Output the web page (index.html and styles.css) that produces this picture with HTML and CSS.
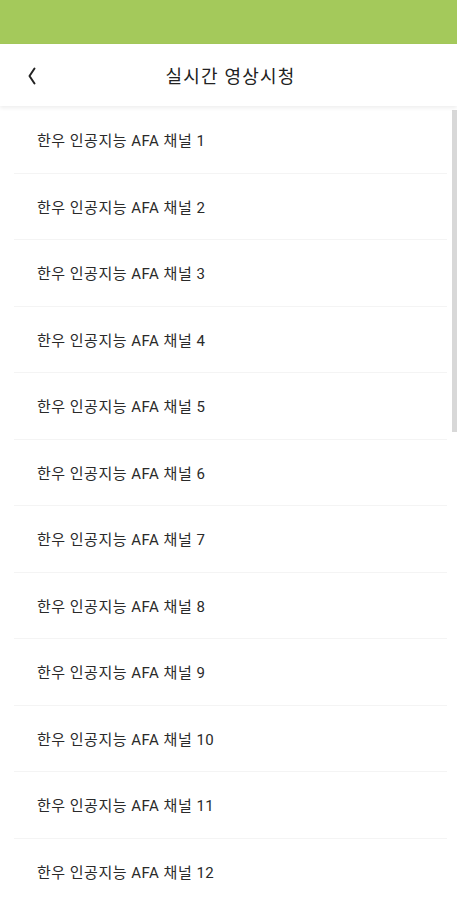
FILE: index.html
```html
<!DOCTYPE html>
<html lang="ko">
<head>
    <meta charset="UTF-8">
    <meta name="viewport" content="width=device-width, initial-scale=1.0">
    <title>실시간 영상시청</title>
    <link rel="stylesheet" href="styles.css">
</head>
<body>
    <div class="status-bar"></div>

    <div class="app-bar">
        <span class="back-btn">
            <svg width="10" height="18" viewBox="0 0 10 18">
                <path d="M7.5 1.5 L2.5 9 L7.5 16.5" fill="none" stroke="#222" stroke-width="2" stroke-linecap="round" stroke-linejoin="round"/>
            </svg>
        </span>
        <h1 class="title">실시간 영상시청</h1>
    </div>

    <div class="list-wrap">
        <ul class="channel-list">
            <li class="channel-item">한우 인공지능 AFA 채널 1</li>
            <li class="channel-item">한우 인공지능 AFA 채널 2</li>
            <li class="channel-item">한우 인공지능 AFA 채널 3</li>
            <li class="channel-item">한우 인공지능 AFA 채널 4</li>
            <li class="channel-item">한우 인공지능 AFA 채널 5</li>
            <li class="channel-item">한우 인공지능 AFA 채널 6</li>
            <li class="channel-item">한우 인공지능 AFA 채널 7</li>
            <li class="channel-item">한우 인공지능 AFA 채널 8</li>
            <li class="channel-item">한우 인공지능 AFA 채널 9</li>
            <li class="channel-item">한우 인공지능 AFA 채널 10</li>
            <li class="channel-item">한우 인공지능 AFA 채널 11</li>
            <li class="channel-item">한우 인공지능 AFA 채널 12</li>
        </ul>
        <div class="scroll-thumb"></div>
    </div>
</body>
</html>
```

FILE: styles.css
```css
body {
    margin: 0;
    background: #fff;
    font-family: Roboto, "Noto Sans CJK KR", sans-serif;
    color: #222;
    overflow: hidden;
}
.status-bar {
    height: 44px;
    background: #a4c95b;
}
.app-bar {
    position: relative;
    height: 62px;
    display: flex;
    align-items: center;
    justify-content: center;
    background: #fff;
    box-shadow: 0 2px 4px rgba(0,0,0,0.07);
    z-index: 1;
}
.back-btn {
    position: absolute;
    left: 27px;
    top: 23px;
    display: flex;
}
.title {
    margin: 0;
    font-size: 18px;
    font-weight: normal;
    letter-spacing: 1.2px;
    padding-left: 4px;
}
.list-wrap {
    position: relative;
}
.channel-list {
    list-style: none;
    margin: 0;
    padding: 1px 10px 0 14px;
}
.channel-item {
    height: 66.5px;
    box-sizing: border-box;
    display: flex;
    align-items: center;
    padding-left: 23px;
    font-size: 15px;
    letter-spacing: 0.5px;
    color: #2a2a2a;
    border-bottom: 1px solid #f4f4f4;
}
.scroll-thumb {
    position: absolute;
    right: 0;
    top: 4px;
    width: 5px;
    height: 322px;
    background: #d8d8d8;
}
```
